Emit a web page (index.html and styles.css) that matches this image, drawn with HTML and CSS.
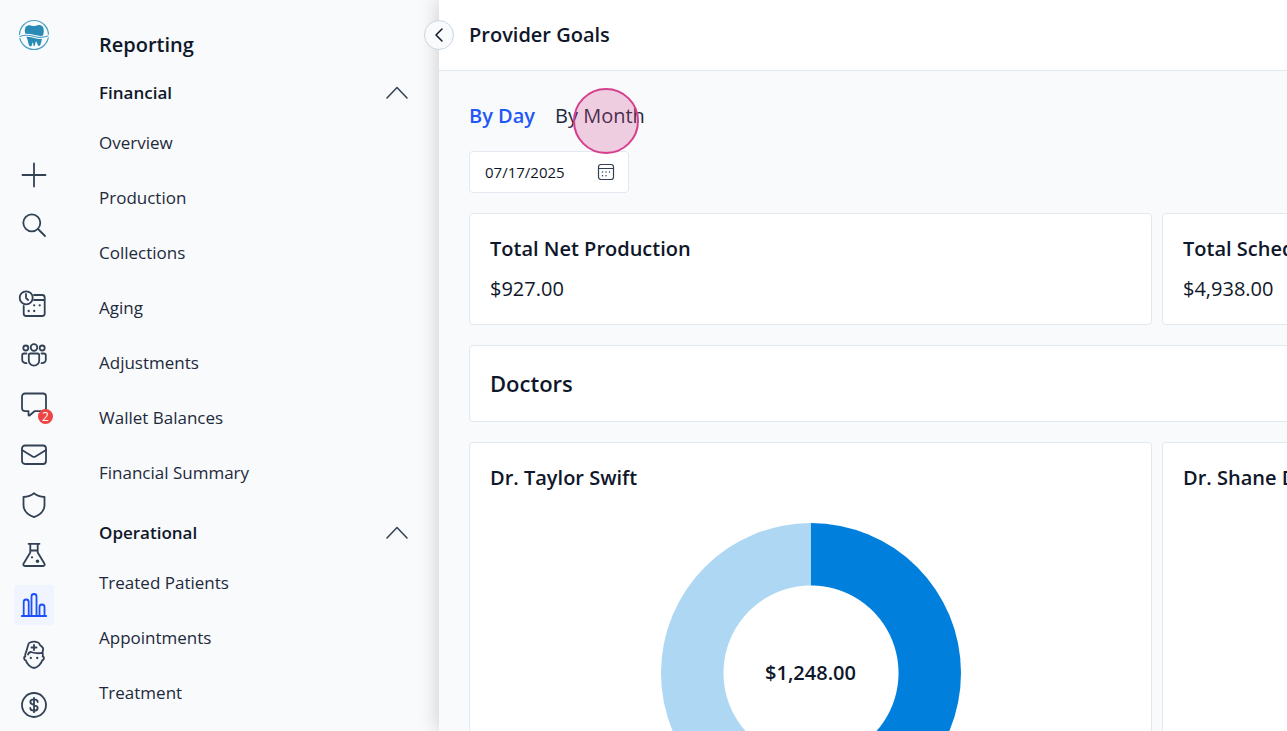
FILE: index.html
```html
<!DOCTYPE html>
<html lang="en">

<head>
    <meta charset="UTF-8">
    <meta name="viewport" content="width=device-width, initial-scale=1.0">
    <title>Provider Goals</title>
    <link rel="stylesheet" href="styles.css">
</head>

<body>
    <div class="app">
        <!-- Icon rail -->
        <nav class="rail" aria-label="Main">
            <a href="#" class="logo" aria-label="Home">
                <svg width="32" height="32" viewBox="0 0 32 32">
                    <circle class="logo-line" cx="16" cy="16" r="14.5" />
                    <path class="logo-tooth" d="M8.500 18C6 12 6 7 10.800 6.200c2-.3 3.500.8 5.200.8s3.500-1.300 5.700-1c4.500.6 5 6 3 11.500-1.200 2.500-1.500 9-3.500 9.500-1.800.3-1.700-4-3.200-4.500-.8.5-.8 4.800-1.800 4.800s-.7-3.800-1.400-3.800-.6 4.300-2.400 4c-2.200-.5-2-6-3.900-9.500z" />
                    <path class="logo-gap" d="M2 17.500c6-2.500 10.500-1.200 14.500 0s8 1.500 13.500-.5" />
                    <path class="logo-line" d="M2 17.500c6-2.500 10.500-1.200 14.500 0s8 1.500 13.500-.5" />
                </svg>
            </a>
            <div class="rail-group">
                <button class="rail-btn" aria-label="Add">
                    <svg viewBox="0 0 28 28"><path d="M14 2.500v23M2.500 14h23" /></svg>
                </button>
                <button class="rail-btn" aria-label="Search">
                    <svg viewBox="0 0 28 28"><circle cx="11.800" cy="11.800" r="8.500" /><path d="M18 18l7 7" /></svg>
                </button>
            </div>
            <div class="rail-group">
                <a href="#" class="rail-btn" aria-label="Schedule">
                    <svg viewBox="0 0 28 28">
                        <circle cx="6.200" cy="6.800" r="6.500" />
                        <path d="M6 3v4l2.200 2M3.700 14.800v7.700a2.500 2.500 0 0 0 2.500 2.500h16a2.500 2.500 0 0 0 2.500-2.500V6.500A2.500 2.500 0 0 0 22.200 4H14M14 9h10.500" />
                        <path class="dots" d="M14.200 14.300h.01M19.700 14.300h.01M8.700 20h.01M14.200 20h.01" />
                    </svg>
                </a>
                <a href="#" class="rail-btn" aria-label="Patients">
                    <svg viewBox="0 0 28 28">
                        <circle cx="14" cy="6.500" r="3.300" /><circle cx="5.800" cy="7" r="2.500" /><circle cx="22.200" cy="7" r="2.500" />
                        <path d="M10.500 12.500h7c1 0 1.700.7 1.700 1.700v5.300a5.200 5.200 0 0 1-10.400 0v-5.300c0-1 .7-1.700 1.700-1.700zM6.500 12.500H4c-1 0-1.800.8-1.800 1.800v4.200c0 2 1.500 3.500 4.300 3.600M21.500 12.500H24c1 0 1.800.8 1.800 1.800v4.200c0 2-1.500 3.500-4.300 3.600" />
                    </svg>
                </a>
                <a href="#" class="rail-btn" aria-label="Messages, 2 unread">
                    <svg viewBox="0 0 28 28"><path d="M23 20.200h-8.500L9.500 24.500c-.5.300-1 0-1-.6v-3.700H5a3 3 0 0 1-3-3V5.500a3 3 0 0 1 3-3h18a3 3 0 0 1 3 3v11.700a3 3 0 0 1-3 3z" /></svg>
                    <span class="badge">2</span>
                </a>
                <a href="#" class="rail-btn" aria-label="Mail">
                    <svg viewBox="0 0 28 28"><rect x="2" y="4.500" width="24" height="18.500" rx="3" /><path d="M2 9l10.500 6.500c1 .6 2 .6 3 0L26 9" /></svg>
                </a>
                <a href="#" class="rail-btn" aria-label="Insurance">
                    <svg viewBox="0 0 28 28"><path d="M14 2.200c3 2.500 6.500 3.500 10.500 3.800v8c0 5.500-3.500 9.500-10.500 12.200C7 23.500 3.500 19.500 3.500 14V6c4-.3 7.500-1.300 10.500-3.800z" /></svg>
                </a>
                <a href="#" class="rail-btn" aria-label="Lab">
                    <svg viewBox="0 0 28 28">
                        <path d="M8.500 2.800h11M10.300 3v8.500L3.500 22.800c-.6 1.200.1 2.200 1.300 2.200h18.400c1.200 0 1.900-1 1.300-2.200L17.700 11.500V3M10.300 9.500h7.400" />
                        <path class="dots" d="M12 16.300h.01" /><circle cx="17.500" cy="20.200" r=".9" />
                    </svg>
                </a>
                <a href="#" class="rail-btn active" aria-label="Reporting">
                    <svg viewBox="0 0 28 28"><path d="M1.800 25h24.400M3.700 25V11a2.500 2.500 0 0 1 5 0v14M11.500 25V5.500a2.500 2.500 0 0 1 5 0V25M19.500 25v-9a2.500 2.500 0 0 1 5 0v9" /></svg>
                </a>
                <a href="#" class="rail-btn" aria-label="Providers">
                    <svg viewBox="0 0 28 28">
                        <path d="M6 11.500L8.300 3.500C8.500 2.500 9 1.800 10 1.500c2.500-1 5.500-1 8 0 1 .3 1.500 1 1.700 2 .3 1.500 3.500 2 3.500 4.500l-.7 3.500M6 11.500C4.800 13 5.300 14 5.300 15.500c-1.800 0-1.500 3.500.5 3.800.7 3.500 5 7.700 8.200 7.700s7.500-4.200 8.200-7.700c2-.3 2.300-3.800.5-3.800 0-1.500.5-2.500-.2-4-3 1.300-8.500.8-11.500-.5-1.500 0-2.500 1-3 2.500" />
                        <path d="M14 4v5M11.500 6.500h5" />
                        <path class="dots" d="M10.800 17h.01M17.200 17h.01" />
                    </svg>
                </a>
                <a href="#" class="rail-btn" aria-label="Billing">
                    <svg viewBox="0 0 28 28"><circle cx="14" cy="14" r="12" /><path d="M14 6.800v14.400M17.700 11c0-1.500-1.500-2.600-3.700-2.600s-3.700 1.100-3.700 2.700c0 3.800 7.400 2 7.400 5.800 0 1.600-1.500 2.700-3.700 2.700s-3.700-1.100-3.700-2.600" /></svg>
                </a>
            </div>
        </nav>

        <!-- Reporting menu -->
        <nav class="menu" aria-label="Reporting">
            <h2 class="menu-title">Reporting</h2>
            <section class="menu-group">
                <button class="menu-head" aria-expanded="true">
                    Financial
                    <svg width="22" height="22" viewBox="0 0 22 22"><path d="M1 16L11 5.500 21 16" /></svg>
                </button>
                <ul>
                    <li><a href="#">Overview</a></li>
                    <li><a href="#">Production</a></li>
                    <li><a href="#">Collections</a></li>
                    <li><a href="#">Aging</a></li>
                    <li><a href="#">Adjustments</a></li>
                    <li><a href="#">Wallet Balances</a></li>
                    <li><a href="#">Financial Summary</a></li>
                </ul>
            </section>
            <section class="menu-group">
                <button class="menu-head" aria-expanded="true">
                    Operational
                    <svg width="22" height="22" viewBox="0 0 22 22"><path d="M1 16L11 5.500 21 16" /></svg>
                </button>
                <ul>
                    <li><a href="#">Treated Patients</a></li>
                    <li><a href="#">Appointments</a></li>
                    <li><a href="#">Treatment</a></li>
                </ul>
            </section>
        </nav>

        <!-- Page -->
        <main class="main">
            <header class="topbar">
                <button class="collapse-btn" aria-label="Collapse menu">
                    <svg width="16" height="16" viewBox="0 0 16 16"><path d="M11 2L5 8l6 6" /></svg>
                </button>
                <h1>Provider Goals</h1>
            </header>

            <div class="content">
                <div class="tabs">
                    <button class="tab active">By Day</button>
                    <button class="tab">By Month<span class="click-marker"></span></button>
                </div>

                <div class="date-field">
                    <input type="text" value="07/17/2025" aria-label="Date">
                    <button aria-label="Open calendar">
                        <svg width="18" height="18" viewBox="0 0 18 18">
                            <rect x="1.500" y="1.500" width="15" height="15" rx="2.500" /><path d="M1.500 5.500h15" />
                            <path class="dots" d="M5.500 9h.01M9 9h.01M12.500 9h.01M5.500 12.800h.01M9 12.800h.01" />
                        </svg>
                    </button>
                </div>

                <div class="cards">
                    <section class="card">
                        <h3>Total Net Production</h3>
                        <p>$927.00</p>
                    </section>
                    <section class="card">
                        <h3>Total Scheduled Production</h3>
                        <p>$4,938.00</p>
                    </section>
                    <section class="card card-wide">
                        <h2>Doctors</h2>
                    </section>
                    <section class="card">
                        <h3>Dr. Taylor Swift</h3>
                        <div class="donut"><span>$1,248.00</span></div>
                    </section>
                    <section class="card">
                        <h3>Dr. Shane Davis</h3>
                    </section>
                </div>
            </div>
        </main>
    </div>
</body>

</html>
```
FILE: styles.css
```css
* {
    box-sizing: border-box;
}

body {
    margin: 0;
    font-family: "Open Sans", "Noto Sans", sans-serif;
    font-size: 20px;
    line-height: 30px;
    color: #0f172a;
    background-color: #f8fafc;
}

h1, h2, h3, p, ul {
    margin: 0;
    padding: 0;
}

h1, h2, h3 {
    font-size: 20px;
    font-weight: 600;
}

button {
    padding: 0;
    border: none;
    background: none;
    font: inherit;
    color: inherit;
    cursor: pointer;
}

a {
    color: inherit;
    text-decoration: none;
}

svg {
    display: block;
    fill: none;
    stroke: #334155;
    stroke-width: 1.5;
    stroke-linecap: round;
    stroke-linejoin: round;
}

.dots {
    stroke-width: 2;
}

.app {
    display: flex;
    height: 100vh;
    overflow: hidden;
}

/* Icon rail */
.rail {
    flex: none;
    width: 68px;
    display: flex;
    flex-direction: column;
    align-items: center;
    padding-top: 19px;
}

.logo {
    margin-bottom: 104px;
}

.logo-line {
    stroke: #4a9fc0;
    stroke-width: 1.2;
}

.logo-tooth {
    fill: #288ab5;
    stroke: none;
}

.logo-gap {
    stroke: #f8fafc;
    stroke-width: 3;
}

.rail-group {
    display: flex;
    flex-direction: column;
    gap: 10px;
    margin-bottom: 40px;
}

.rail-btn {
    position: relative;
    width: 40px;
    height: 40px;
    flex: none;
    display: flex;
    align-items: center;
    justify-content: center;
    border-radius: 4px;
}

.rail-btn svg {
    width: 28px;
    height: 28px;
    stroke-width: 1.8;
    overflow: visible;
}

.rail-btn .dots {
    stroke-width: 2.3;
}

.rail-btn.active {
    background-color: #eff4ff;
}

.rail-btn.active svg {
    stroke: #1d4ffb;
}

.badge {
    position: absolute;
    right: 1px;
    bottom: 1px;
    width: 15px;
    height: 15px;
    border-radius: 50%;
    background-color: #ef4444;
    color: #fff;
    font-size: 12px;
    line-height: 15px;
    text-align: center;
}

/* Reporting menu */
.menu {
    flex: none;
    width: 371px;
    padding: 30px 31px 0;
}

.menu-title {
    margin-bottom: 10px;
}

.menu-group {
    margin-bottom: 10px;
}

.menu-head {
    width: 100%;
    height: 45px;
    display: flex;
    align-items: center;
    justify-content: space-between;
    font-size: 17px;
    font-weight: 600;
}

.menu ul {
    list-style: none;
}

.menu li a {
    display: flex;
    align-items: center;
    height: 55px;
    font-size: 17px;
    color: #1e293b;
}

/* Page */
.main {
    flex: 1;
    min-width: 0;
    background-color: #f8fafc;
    box-shadow: 0 0 20px rgba(0, 0, 0, 0.2);
}

.topbar {
    position: relative;
    display: flex;
    align-items: center;
    height: 71px;
    padding: 0 30px;
    background-color: #fff;
    border-bottom: 1px solid #e2e8f0;
}

.collapse-btn {
    position: absolute;
    left: -15px;
    top: 20px;
    width: 30px;
    height: 30px;
    display: flex;
    align-items: center;
    justify-content: center;
    border: 1px solid #cbd5e1;
    border-radius: 50%;
    background-color: #f8fafc;
}

.collapse-btn svg {
    stroke: #0f172a;
}

.content {
    padding: 30px;
    overflow: hidden;
}

.tabs {
    display: flex;
    gap: 20px;
    margin-bottom: 20px;
}

.tab {
    position: relative;
    color: #1e293b;
}

.tab.active {
    color: #2257f5;
    font-weight: 600;
}

.click-marker {
    position: absolute;
    right: 6px;
    top: -13px;
    width: 66px;
    height: 66px;
    border: 2px solid #d63f8c;
    border-radius: 50%;
    background-color: rgba(214, 63, 140, 0.24);
    z-index: 1;
}

.date-field {
    display: flex;
    align-items: center;
    width: 160px;
    height: 42px;
    padding: 0 13px 0 15px;
    margin-bottom: 20px;
    border: 1px solid #e2e8f0;
    border-radius: 4px;
    background-color: #fff;
}

.date-field input {
    flex: 1;
    min-width: 0;
    padding: 0;
    border: none;
    outline: none;
    background: none;
    font: inherit;
    font-size: 15px;
    color: #0f172a;
}

.date-field svg {
    stroke-width: 1.2;
}

.date-field .dots {
    stroke-width: 1.5;
}

.cards {
    display: grid;
    grid-template-columns: repeat(2, minmax(683px, 1fr));
    gap: 20px 10px;
}

.card {
    padding: 20px;
    border: 1px solid #e2e8f0;
    border-radius: 4px;
    background-color: #fff;
}

.card p {
    margin-top: 10px;
}

.card-wide {
    grid-column: 1 / -1;
}

.card-wide h2 {
    font-size: 22px;
    line-height: 35px;
}

.donut {
    display: flex;
    align-items: center;
    justify-content: center;
    width: 300px;
    height: 300px;
    margin: 30px auto;
    border-radius: 50%;
    background: radial-gradient(circle, #fff 87px, transparent 88px), conic-gradient(#007fdd 50%, #aed7f4 50%);
    font-weight: 600;
}
```
